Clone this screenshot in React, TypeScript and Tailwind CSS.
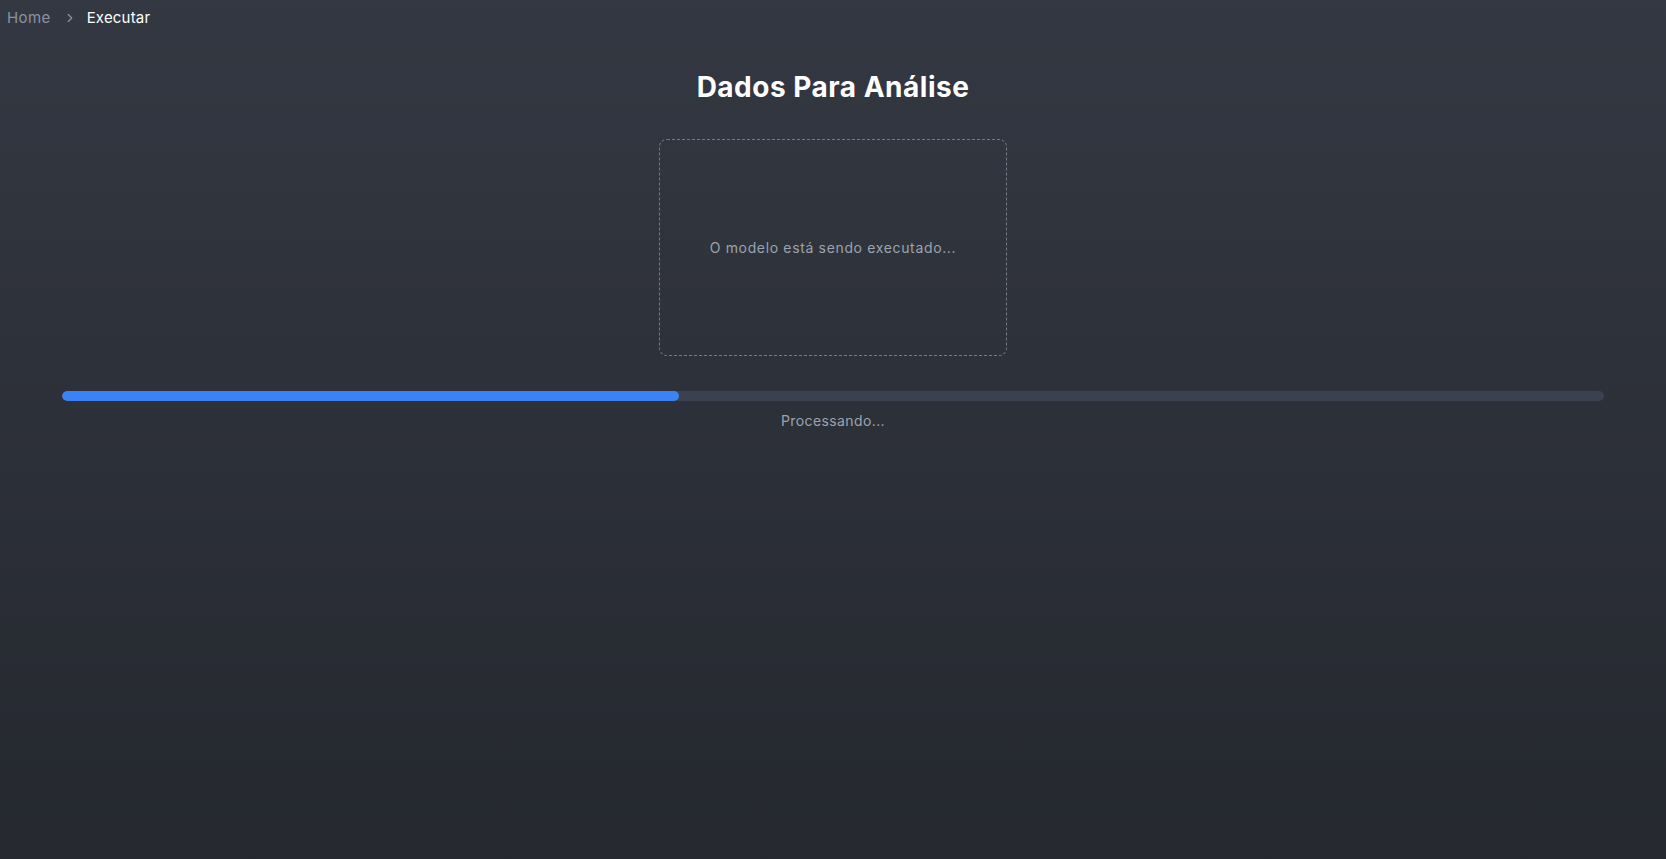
import { ChevronRight } from 'lucide-react';

const progress = 40;

const App = () => {
  return (
    <div className="min-h-screen h-[859px] bg-gradient-to-b from-[#343842] to-[#25282f] font-['Inter','Liberation_Sans',sans-serif] flex flex-col">
      {/* Breadcrumb */}
      <nav className="flex items-center h-[34px] pl-[7px] pt-[2px] text-[15px] tracking-[0.4px]">
        <span className="text-[#8b93a1]">Home</span>
        <ChevronRight className="h-[14px] w-[14px] text-[#8b93a1] ml-[12px] mr-[10px]" strokeWidth={2} />
        <span className="text-white tracking-[0.2px]">Executar</span>
      </nav>

      <main className="flex flex-col items-center">
        <h1 className="mt-[33px] text-[28px] font-bold text-white tracking-[0.5px] leading-[40px]">Dados Para Análise</h1>

        <div className="mt-[32px] w-[348px] h-[217px] border border-dashed border-[#737a86] rounded-lg flex items-center justify-center">
          <p className="text-[14px] text-[#9ca3af] tracking-[0.65px]">O modelo está sendo executado...</p>
        </div>

        <div className="w-full px-[62px] mt-[35px]">
          <div className="h-[10px] w-full rounded-full bg-[#3a4252] overflow-hidden">
            <div className="h-full rounded-full bg-[#3b82f6]" style={{ width: `${progress}%` }} />
          </div>
        </div>
        <p className="mt-[9px] text-[14px] text-[#9ca3af] tracking-[0.4px]">Processando...</p>
      </main>
    </div>
  );
};

export default App;
